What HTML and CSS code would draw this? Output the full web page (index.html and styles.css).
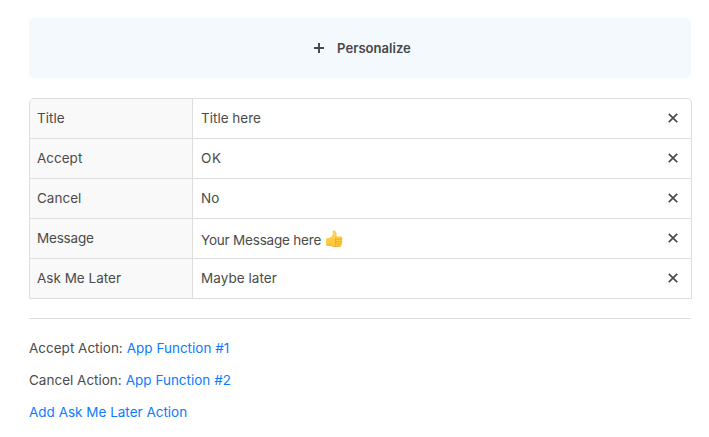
FILE: index.html
```html
<!DOCTYPE html>
<html lang="en">
<head>
<meta charset="utf-8">
<title>Personalize</title>
<link rel="stylesheet" href="styles.css">
</head>
<body>
<svg class="defs" width="0" height="0"><symbol id="x" viewBox="0 0 10 10"><path d="M.8.8 9.2 9.2M9.2.8.8 9.2" fill="none" stroke="currentColor" stroke-width="1.7"/></symbol></svg>
<main>
<button class="personalize"><svg width="10" height="10" viewBox="0 0 10 10"><path d="M5 0v10M0 5h10" stroke="currentColor" stroke-width="2"/></svg><span>Personalize</span></button>
<div class="table">
<div class="row"><div class="key"><span>Title</span></div><div class="value"><span>Title here</span><svg class="remove"><use href="#x"/></svg></div></div>
<div class="row"><div class="key"><span>Accept</span></div><div class="value"><span class="ok">OK</span><svg class="remove"><use href="#x"/></svg></div></div>
<div class="row"><div class="key"><span>Cancel</span></div><div class="value"><span>No</span><svg class="remove"><use href="#x"/></svg></div></div>
<div class="row"><div class="key"><span class="message">Message</span></div><div class="value"><span class="your-message">Your Message here</span><svg class="thumb" width="17" height="18" viewBox="0 0 17 18"><path d="M.3 8.2Q3.4 8.4 4.8 7.3L7 4.8 6.6 1.8Q6.9.2 8.4.6 10 1.2 10.5 3.6L10.8 6.6h4.1q1.7.3 1.5 1.6 0 .9-.5 1.3.9 1.1 0 2.3.7 1.2-.3 2.2.3 1.3-.7 1.9-.8.9-2.4.9H8.8Q6.8 16.9 5.4 15.8L.3 15.6Q-.2 12 .3 8.2z" fill="#ffc83d"/><path d="M.4 15.1q3 0 5 .4 1.6 1.1 3.4 1h3.7q1.6 0 2.3-.8M10.2 9.3h5.6M10.2 11.7h5.5M10.2 14h5.1M9.5 8v7.6" fill="none" stroke="#eba51f" stroke-width=".8"/><path d="M8 1.6 8.7 5 6.5 8.5" fill="none" stroke="#ffdc64" stroke-width="1.2"/></svg><svg class="remove"><use href="#x"/></svg></div></div>
<div class="row"><div class="key"><span>Ask Me Later</span></div><div class="value"><span class="maybe">Maybe later</span><svg class="remove"><use href="#x"/></svg></div></div>
</div>
<hr>
<div class="actions">
<div><span>Accept Action:</span><a>App Function #1</a></div>
<div><span>Cancel Action:</span><a>App Function #2</a></div>
<div><a>Add Ask Me Later Action</a></div>
</div>
</main>
</body>
</html>
```
FILE: styles.css
```css
* { box-sizing: border-box; }
body { margin: 0; background: #fff; color: #4b4b4b; font: 13.5px/20px Inter, "Liberation Sans", sans-serif; }
.defs { display: none; }
main { padding: 18px 17px 0 29px; }
.personalize { display: flex; align-items: center; justify-content: center; gap: 13px; width: 662px; height: 60px; padding: 0 0 0 5px; border: 0; border-radius: 5px; background: #f4f9fd; color: #484848; font: 600 13.1px/20px Inter, sans-serif; }
.table { width: 663px; margin-top: 20px; border: 1px solid #dedede; border-radius: 5px 5px 0 0; overflow: hidden; }
.row { display: flex; height: 40px; border-bottom: 1px solid #dedede; }
.row:last-child { height: 39px; border-bottom: 0; }
.key { flex: none; width: 162px; padding: 9px 7px; background: #f9f9f9; }
.value { flex: 1; display: flex; padding: 9px 13px 0 8px; border-left: 1px solid #dedede; }
.remove { width: 10px; height: 10px; margin: 5px 0 0 auto; }
.thumb { margin: 2px 0 0 5px; }
.your-message { padding-top: 2px; letter-spacing: -.2px; }
.message { letter-spacing: -.2px; }
.maybe { letter-spacing: .05px; }
.ok { letter-spacing: .8px; }
span, a { white-space: nowrap; }
hr { width: 662px; height: 1px; margin: 19px 0; border: 0; background: #dedede; }
.actions { display: grid; gap: 12px; }
.actions div { display: flex; gap: 4px; }
a { color: #0d7bff; }
```
